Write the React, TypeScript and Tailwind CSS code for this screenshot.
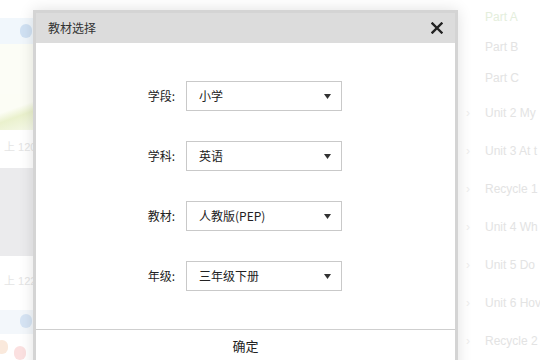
import React from "react";

const rows = [
  { label: "学段:", value: "小学" },
  { label: "学科:", value: "英语" },
  { label: "教材:", value: "人教版(PEP)" },
  { label: "年级:", value: "三年级下册" },
];

const list = [
  { t: "Part A", chev: false, green: true, h: 30 },
  { t: "Part B", chev: false, h: 30 },
  { t: "Part C", chev: false, h: 32 },
  { t: "Unit 2 My", chev: true, h: 38 },
  { t: "Unit 3 At t", chev: true, h: 38 },
  { t: "Recycle 1", chev: true, h: 38 },
  { t: "Unit 4 Wh", chev: true, h: 38 },
  { t: "Unit 5 Do", chev: true, h: 38 },
  { t: "Unit 6 Hov", chev: true, h: 38 },
  { t: "Recycle 2", chev: true, h: 38 },
];

export default function App() {
  return (
    <div
      className="relative w-[540px] h-[360px] overflow-hidden bg-white"
      style={{ fontFamily: '"Liberation Sans", "Noto Sans CJK SC", sans-serif' }}
    >
      {/* faded background page */}
      <div className="flex h-full">
        <div className="w-[34px] h-full flex flex-col">
          <div className="h-[18px]" />
          <div className="h-[26px] bg-[#f1f7fc] relative">
            <div className="absolute right-[2px] top-[6px] w-[12px] h-[14px] rounded-full bg-[#d0e1f3]" />
          </div>
          <div className="h-[50px] bg-[#fcfdf6]" />
          <div className="h-[36px] bg-[linear-gradient(160deg,#fcfdf5_40%,#eaf1cd_60%,#f6f9ea_100%)]" />
          <div className="h-[10px]" />
          <div className="h-[14px] text-[11px] text-[#e4e4e4] leading-[14px] pl-[4px] whitespace-nowrap">上 120</div>
          <div className="h-[14px]" />
          <div className="h-[88px] bg-[#ebebed]" />
          <div className="h-[18px]" />
          <div className="h-[14px] text-[11px] text-[#e4e4e4] leading-[14px] pl-[4px] whitespace-nowrap">上 122</div>
          <div className="h-[22px]" />
          <div className="h-[24px] bg-[#f3f7fb] relative">
            <div className="absolute right-[2px] top-[4px] w-[12px] h-[14px] rounded-full bg-[#d6e4f4]" />
          </div>
          <div className="flex-1 relative">
            <div className="absolute left-[-4px] top-[6px] w-[12px] h-[14px] rounded-full bg-[#fae9dc]" />
            <div className="absolute left-[14px] top-[12px] w-[12px] h-[14px] rounded-full bg-[#fbe0e0]" />
          </div>
        </div>
        <div className="flex-1" />
        <div className="w-[82px] shrink-0 flex flex-col pt-[2px] overflow-hidden">
          {list.map((it) => (
            <div key={it.t} className="flex items-center whitespace-nowrap" style={{ height: it.h }}>
              <span className="w-[27px] shrink-0 text-[#eeeeee] text-[12px] pl-[8px]">{it.chev ? "›" : ""}</span>
              <span className={`shrink-0 text-[12px] ${it.green ? "text-[#e4eedc]" : "text-[#e3e3e3]"}`}>{it.t}</span>
            </div>
          ))}
        </div>
      </div>

      {/* modal */}
      <div className="absolute left-[33px] top-[10px] w-[425px] h-[370px] bg-white border-[3px] border-[#d4d4d4] shadow-[0_0_14px_rgba(0,0,0,0.12)] flex flex-col">
        <div className="h-[30px] bg-[#dcdcdc] flex items-center justify-between pl-[12px] pr-[12px]">
          <span className="text-[12px] text-[#333]" style={{ fontFamily: '"Noto Sans CJK SC", sans-serif' }}>教材选择</span>
          <svg width="12" height="12" viewBox="0 0 12 12">
            <path d="M1.5 1.5 L10.5 10.5 M10.5 1.5 L1.5 10.5" stroke="#222" strokeWidth="2.4" strokeLinecap="square" />
          </svg>
        </div>
        <div className="flex flex-col pt-[38px] gap-[30px]">
          {rows.map((r) => (
            <div key={r.label} className="flex items-center h-[30px]">
              <span
                className="w-[139px] text-right text-[12px] text-[#222]"
                style={{ fontFamily: '"Noto Sans CJK SC", sans-serif' }}
              >
                {r.label}
              </span>
              <div className="ml-[11px] w-[156px] h-[30px] border border-[#c9c9c9] flex items-center justify-between pl-[12px] pr-[10px]">
                <span className="text-[12px] text-[#222]" style={{ fontFamily: '"Noto Sans CJK SC", sans-serif' }}>{r.value}</span>
                <svg width="7" height="5" viewBox="0 0 7 5">
                  <path d="M0 0 L7 0 L3.5 5 Z" fill="#333" />
                </svg>
              </div>
            </div>
          ))}
        </div>
        <div className="mt-[38px] border-t border-[#cfcfcf] h-[32px] flex items-center justify-center">
          <span className="text-[13px] text-[#222]" style={{ fontFamily: '"Noto Sans CJK SC", sans-serif' }}>确定</span>
        </div>
      </div>
    </div>
  );
}
